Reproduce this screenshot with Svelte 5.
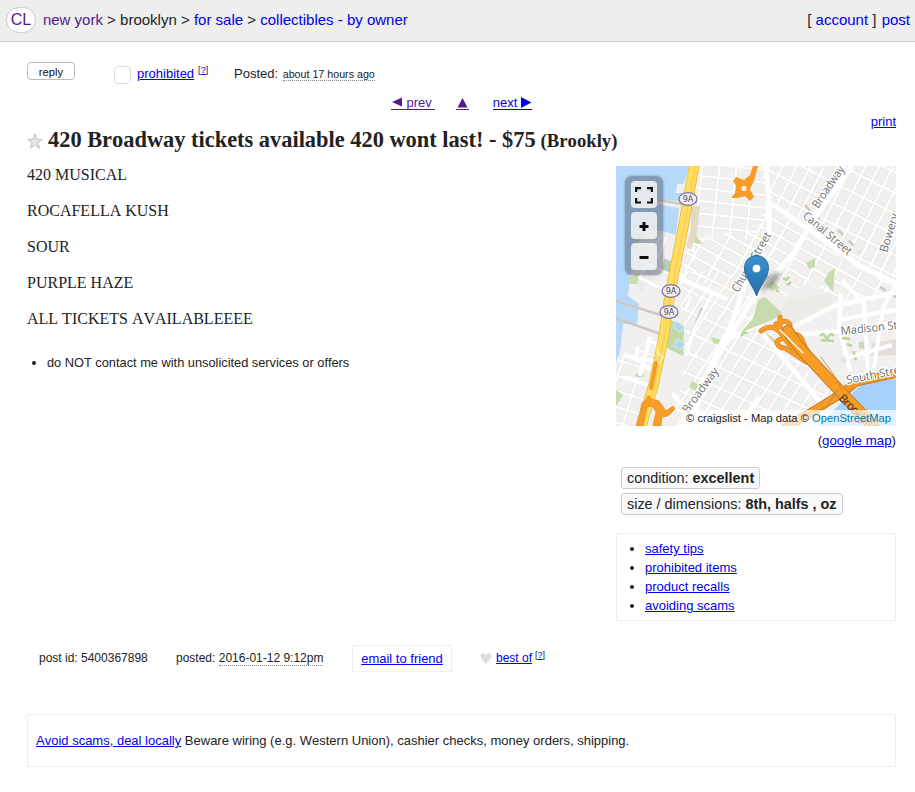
<script>
  const lines = ['420 MUSICAL', 'ROCAFELLA KUSH', 'SOUR', 'PURPLE HAZE', 'ALL TICKETS AVAILABLEEEE'];
  const tips = ['safety tips', 'prohibited items', 'product recalls', 'avoiding scams'];
  const shields = [[72, 33], [55, 125], [53, 146]];
  const highway = 'M78.500 -2L72 34L67 62L61 92L54 128L47 174L38 217L25 262';
  const bridge = 'M172 165Q181 180 194 193L222 223L263 266';
  const ramps = 'M145 165Q155 157 164 166Q174 182 185 188M160 158L168 166M164 165L164 151M163 163C163 151 175 155 174 161C173 168 166 165 168 171L184 184M184 186C174 181 175 167 182 169C188 171 185 178 193 187M166 173C158 173 161 183 169 182L190 196';
  const shore = 'M166 264L207 239L228 226L240 216L258 212L282 207';
</script>

<header>
  <nav class="crumbs">
    <a class="logo visited" href="#home">CL</a>
    <a class="visited" href="#ny">new york</a><span>&gt;</span><span>brooklyn</span><span>&gt;</span><a href="#sale">for sale</a><span>&gt;</span><a href="#owner">collectibles - by owner</a>
  </nav>
  <div>[ <a href="#account">account</a> ] <a class="post" href="#post">post</a></div>
</header>

<main>
  <div class="tools">
    <button class="reply">reply</button>
    <div class="flag"><i class="check"></i><a href="#prohibited">prohibited</a><sup>[<a href="#help">?</a>]</sup></div>
    <div class="age">Posted: <time>about 17 hours ago</time></div>
  </div>
  <div class="pager">
    <a class="visited prev" href="#prev"><svg width="11" height="10"><path d="M1 5L11 .5V9.5Z" /></svg>prev</a>
    <a class="visited up" href="#up"><svg width="13" height="11"><path d="M6.500 1L11.500 10.500H1.500Z" /></svg></a>
    <a class="next" href="#next">next<svg width="11" height="11"><path d="M0 0L10.500 5.500L0 11Z" /></svg></a>
  </div>
  <div class="print"><a href="#print">print</a></div>
  <h1>
    <svg width="16" height="17" viewBox="0 0 16 17"><path d="M8 1L9.800 6.300H15.300L10.900 9.700L12.500 15.300L8 12L3.500 15.300L5.100 9.700L.7 6.300H6.200Z" fill="#e8e8e8" stroke="#bbb" stroke-width=".9" /></svg>
    <span class="subject">420 Broadway tickets available 420 wont last! - $75</span>
    <small>(Brookly)</small>
  </h1>

  <section class="content">
    <article>
      {#each lines as line}<p>{line}</p>{/each}
      <ul><li>do NOT contact me with unsolicited services or offers</li></ul>
    </article>
    <aside>
      <div class="map">
        <svg class="tiles" width="280" height="260" viewBox="0 0 280 260">
          <defs>
            <pattern id="g1" width="17" height="12.5" patternUnits="userSpaceOnUse" patternTransform="rotate(6)"><path d="M0 0H17M0 0V12.500" stroke="#fff" stroke-width="5" /><path d="M2.500 2.500H17V12.500H2.500Z" fill="none" stroke="#dedbd6" stroke-width=".5" /></pattern>
            <pattern id="g2" width="18.500" height="12.300" patternUnits="userSpaceOnUse" patternTransform="translate(150 4) rotate(-63)"><path d="M0 0H18.500M0 0V12.300" stroke="#fff" stroke-width="5" /><path d="M2.500 2.500H18.500V12.300H2.500Z" fill="none" stroke="#dedbd6" stroke-width=".5" /></pattern>
            <pattern id="g3" width="22" height="11.800" patternUnits="userSpaceOnUse" patternTransform="translate(158 80) rotate(29)"><path d="M0 0H22M0 0V11.800" stroke="#fff" stroke-width="5" /><path d="M2.500 2.500H22V11.800H2.500Z" fill="none" stroke="#dedbd6" stroke-width=".5" /></pattern>
            <pattern id="g4" width="19" height="13" patternUnits="userSpaceOnUse" patternTransform="translate(100 180) rotate(-57) skewX(8)"><path d="M0 0H19M0 0V13" stroke="#fff" stroke-width="4.800" /><path d="M2.400 2.400H19V13H2.400Z" fill="none" stroke="#dedbd6" stroke-width=".5" /></pattern>
            <pattern id="g5" width="19" height="15" patternUnits="userSpaceOnUse" patternTransform="translate(10 180) rotate(17)"><path d="M0 0H19M0 0V15" stroke="#fff" stroke-width="4.500" /><path d="M2.200 2.200H19V15H2.200Z" fill="none" stroke="#dedbd6" stroke-width=".5" /></pattern>
            <linearGradient id="pin" x2="0" y2="1"><stop stop-color="#3c91d2" /><stop offset="1" stop-color="#226da8" /></linearGradient>
            <filter id="soft"><feGaussianBlur stdDeviation="2" /></filter>
          </defs>
          <rect width="280" height="260" fill="#f1f0ee" />
          <path d="M82 0H150L153 48L138 75L103 65L72 95L75 54Z" fill="url(#g1)" />
          <path d="M145 0H280V112L245 104L190 61L150 28Z" fill="url(#g2)" />
          <path d="M71 76L103 67L141 66L150 31L194 66L240 104L280 119V142L218 140L199 112L171 130L128 110L75 119L63 105Z" fill="url(#g3)" />
          <path d="M62 105L135 108L143 120L141 154L162 171L192 198L228 230L195 243L168 260H58L70 190Z" fill="url(#g4)" />
          <path d="M0 187L45 181L31 260H0Z" fill="url(#g5)" />
          <path d="M205 140L282 126V211L242 215L190 181Z" fill="#f1f0ee" />
          <path d="M172 134L215 127L216 141L171 161L163 146Z" fill="#edebe8" />

          <path d="M0 0H73L68 18L61 18L60 27H66L64 35L40 34V38L63 42L60 69L46 65L20 62L19 78L14 112L12 130L23 138L21 158L7 158L4 186L0 196Z" fill="#b5d9fa" />
          <path d="M280 213L260 215L245 219L229 233L202 260H280Z" fill="#a6d1fa" />
          <path d="M20 72C28 61 43 66 48 78L38 113L25 126L14 111Z" fill="#ebebe9" />
          <path d="M17 65L29 69L20 79Z" fill="#c5d5b5" />
          <path d="M14 111L26 107L21 118L13 118ZM80 70L87 78L78 77ZM150 108L164 122L157 125L149 120ZM190 97L199 92V101L193 103ZM213 106L219 102L217 126L208 115Z" fill="#c7dbae" />
          <path d="M53 153L68 161L67 190L51 182Z" fill="#c2d8ad" />
          <path d="M60 155L68 160L64 166L57 161ZM62 173L69 178L64 184L57 179Z" fill="#b0d8ee" stroke="#dbeae1" />
          <path d="M76 215L83 219L79 225L73 221ZM95 171L109 175V181L97 177ZM0 224L7 229L0 240ZM19 208H28V211H20ZM243 176L251 175V184L243 182Z" fill="#c7dbae" />
          <path d="M48 93L59 96L54 110L46 106Z" fill="#b9ceb9" />
          <path d="M75 40L84 40L80 72L74 83L70 80L75 64Z" fill="#e5d9bf" />
          <path d="M149 166L168 180L160 187L151 173Z" fill="#e2d2aa" />
          <path d="M256 177L282 173V189L255 190Z" fill="#e3dedb" />
          <g fill="none" stroke="#cdc8c1" stroke-width="2.500"><path d="M-1 135L48 150M-1 152L45 168M42 34L66 38M86 142L75 170M189 39L194 45" /><path d="M198 49L211 57M222 64L244 86M264 121L280 131" stroke-dasharray="7 8" /></g>
          <g fill="none" stroke="#fff" stroke-width="5">
            <path d="M151 35L194 64L244 100L280 117M150 0L153 34L153 67L130 116L116 156L95 207L73 260M236 0L204 44L177 88L136 134L106 183L79 232L64 260" />
            <path d="M111 133L61 111M143 158L106 176L65 260M140 160L207 239M166 170L226 165L282 157M171 164L218 140L282 126M225 128L223 159L234 205" stroke-width="4.500" />
            <path d="M226 114L248 138L252 207M280 118L267 142L258 202M222 154L280 144M230 192L276 179M68 111L57 105M34 171L24 210M8 190L38 195M7 211L35 220M22 181L20 192M56 227L84 260M143 231L123 260" stroke-width="4" />
            <path d="M22 111L61 130M25 95L60 111M45 70L24 111M42 92L50 71M10 188L37 204M31 173L43 180M70 143L75 130M97 126L78 163L70 190" stroke-width="2.800" />
          </g>
          <path d="M142 134L149 131L166 147L156 154L141 160L124 167L137 153Z" fill="#c7dbae" />
          <path d="M204 170q3-4 5 0t4 0t5 0M205 174l13 1M226 172l8 1M231 178l5 2M238 185v4M238 192l3 2M167 112l3 2l3-3M171 119l4-3M160 124l3 2M125 170q4-6 6-2" fill="none" stroke="#b9d59c" stroke-width="2.500" />
          <circle cx="228" cy="194" r="2.200" fill="none" stroke="#d6d3cf" />
          <path d={highway} fill="none" stroke="#ecb927" stroke-width="10.5" />
          <path d={highway} fill="none" stroke="#ffdc66" stroke-width="9" />
          <path d={highway} fill="none" stroke="#fbca3c" stroke-width="1" transform="translate(1 0)" />
          <path d="M41 181L42 188L47 191L42 198" fill="none" stroke="#fff" />
          <path d="M120 11L128 14L134 9L137 0H142L138 15L134 23L138 31L134 35L129 30L122 32L115 32L119 27L120 20L117 15Z" fill="#f79c26" />
          <circle cx="128" cy="22.500" r="2.700" fill="#fbead4" />
          <path d="M32 229L36 233L43 235L48 242L50 245L57 240L59 243L52 250L46 251L45 260H37L40 246L36 240L31 241L27 260H20L24 246L26 237L31 233Z" fill="#f69c27" stroke="#e48c25" stroke-width=".7" />
          <g fill="none" stroke-linecap="round" stroke-linejoin="round">
            <path d="M40 197L35 222" stroke="#f59c27" stroke-width="4" />
            <path d={shore} stroke="#c57725" stroke-width="9" /><path d={shore} stroke="#f59b27" stroke-width="7" />
            <path d={ramps} stroke="#cd802f" stroke-width="5" /><path d={ramps} stroke="#f69b27" stroke-width="3.800" />
            <path d={bridge} stroke="#c57925" stroke-width="12" /><path d={bridge} stroke="#f79c25" stroke-width="10" />
            <path d="M164 164L187 187" stroke="#fff" stroke-width="1.300" />
            <path d="M205 191L218 209L226 224M192 249L211 240L222 223M229 231L239 218" stroke="#d48023" stroke-width=".8" />
          </g>
          <g class="streets" stroke="#fff" stroke-width="2.500" paint-order="stroke" stroke-linejoin="round" fill="#706f6e">
            <text transform="translate(202 43) rotate(-56)" textLength="48" lengthAdjust="spacingAndGlyphs">Broadway</text>
            <text transform="translate(186 51) rotate(40)" textLength="60" lengthAdjust="spacingAndGlyphs">Canal Street</text>
            <text transform="translate(271 87) rotate(-73)" textLength="40">Bowery</text>
            <text transform="translate(122 127) rotate(-60)" textLength="67" lengthAdjust="spacingAndGlyphs">Church Street</text>
            <text transform="translate(72 248) rotate(-54)" textLength="53" lengthAdjust="spacingAndGlyphs">Broadway</text>
            <text transform="translate(225 169) rotate(-6)" textLength="78">Madison Street</text>
            <text transform="translate(231 218) rotate(-11)" textLength="65">South Street</text>
            <text class="bridge-name" transform="translate(222 233) rotate(44)" stroke="none" textLength="75">Brooklyn Bridge</text>
          </g>
          {#each shields as [x, y]}
            <ellipse cx={x} cy={y} rx="9" ry="6.300" fill="#f5efea" stroke="#7777a6" stroke-width="1.300" />
            <text class="shield" {x} y={y + 3} text-anchor="middle">9A</text>
          {/each}
          <path d="M142 127L151 112Q162 103 164 108Q164 114 152 122Z" fill="#222" opacity=".4" filter="url(#soft)" />
          <path d="M140.500 130C137 119 128.500 112 128.500 101.500A12 12 0 0 1 152.500 101.500C152.500 112 144 119 140.500 130Z" fill="url(#pin)" stroke="#2c6b9e" />
          <circle cx="140.500" cy="102.500" r="4.300" fill="#fff" stroke="#3277ad" stroke-width=".7" />
        </svg>
        <div class="controls">
          <span><svg width="18" height="18"><path d="M1.100 6V2.100H6M12 2.100H16.900V6M16.900 12V16.500H12M6 16.500H1.100V12" /></svg></span>
          <span><svg width="18" height="16"><path d="M9 4V13M4.500 8.500H13.500" stroke-width="3" /></svg></span>
          <span><svg width="18" height="16"><path d="M4.500 8.500H13.500" stroke-width="3" /></svg></span>
        </div>
        <div class="credit">© craigslist - Map data © <a href="#osm">OpenStreetMap</a></div>
      </div>
      <div class="google">(<a href="#google">google map</a>)</div>
      <div class="attrs">
        <span>condition: <b>excellent</b></span>
        <span>size / dimensions: <b>8th, halfs , oz</b></span>
      </div>
      <ul class="tips">{#each tips as tip}<li><a href="#tip">{tip}</a></li>{/each}</ul>
    </aside>
  </section>

  <div class="info">
    <span class="id">post id: 5400367898</span>
    <span class="date">posted: <time>2016-01-12 9:12pm</time></span>
    <div class="email"><a href="#email">email to friend</a></div>
    <svg width="12" height="12" viewBox="0 0 12 12"><path d="M6 12C4.500 8 .5 6 .5 3C.5-.3 4.500-.7 6 2.500C7.500-.7 11.500-.3 11.500 3C11.500 6 7.500 8 6 12Z" fill="#ddd" /></svg>
    <a class="best" href="#best">best of</a><sup>[<a href="#help">?</a>]</sup>
  </div>
  <div class="warning"><a href="#scams">Avoid scams, deal locally</a> Beware wiring (e.g. Western Union), cashier checks, money orders, shipping.</div>
</main>

<style>
  :global(body) { background: #fff; color: #222; font: 13px "Liberation Sans", Arial, sans-serif; font-kerning: none; }
  a { color: #00e; }
  a.visited { color: #551a8b; }
  header { height: 41px; border-bottom: 1px solid #ccc; background: #eee; display: flex; align-items: center; justify-content: space-between; padding: 0 5px 0 6px; font-size: 15px; line-height: 18px; }
  header > div { margin-top: -2px; }
  header a { text-decoration: none; }
  .post { margin-left: 1px; }
  .crumbs { display: flex; align-items: center; gap: 4.2px; margin-top: -1px; }
  .logo { box-sizing: border-box; width: 30px; height: 26px; border: 1px solid #ccc; border-radius: 14px; background: #fff; font-size: 16px; line-height: 24px; text-align: center; margin-right: 2.700px; }
  main { padding: 0 19px 0 27px; }
  .tools { display: flex; align-items: flex-start; height: 31px; padding-top: 20px; }
  .reply { width: 48px; height: 18px; padding: 1px 0 0; border: 1px solid #bbb; border-radius: 4px; background: #fff; color: #111; font: 11.3px/16px "Liberation Sans", Arial, sans-serif; }
  .flag { display: flex; margin: 3px 0 0 39px; line-height: 18px; width: 120px; }
  .check { box-sizing: border-box; width: 17px; height: 18px; border: 1px solid #ddd; border-radius: 4px; margin: 1px 6px 0 0; }
  sup { font-size: 9px; line-height: 11px; margin-left: 4px; vertical-align: top; }
  .age { margin-top: 3px; line-height: 18px; }
  .age time { margin-left: 1px; }
  time { font-size: 10.700px; border-bottom: 1px dotted #888; }
  .pager { display: flex; justify-content: center; height: 20px; line-height: 15px; padding-top: 2px; box-sizing: border-box; }
  .pager a { text-decoration: none; border-bottom: 1px solid currentColor; height: 14px; display: flex; align-items: center; }
  .pager svg { fill: currentColor; }
  .prev { gap: 5px; padding-right: 3px; margin-right: 21px; }
  .up { margin-right: 24px; }
  .next { gap: 4px; }
  .print { text-align: right; line-height: 18px; height: 16px; }
  h1 { display: flex; align-items: baseline; margin: 0 0 11px; height: 26px; line-height: 22px; font-family: "Liberation Serif", "Times New Roman", serif; font-size: 22.4px; white-space: nowrap; }
  h1 > svg { margin: 4px 5px 0 0; align-self: flex-start; }
  h1 small { font-size: 18.7px; margin-left: 5px; }
  .content { display: flex; height: 479px; }
  article { flex: 1; }
  article p { margin: 0 0 18px; font: 16px/18px "Liberation Serif", "Times New Roman", serif; font-kerning: none; }
  article ul { margin: 27px 0 0; padding-left: 20px; font-size: 12.8px; line-height: 15px; }
  aside { width: 280px; }
  .map { position: relative; width: 280px; height: 260px; overflow: hidden; }
  .tiles { display: block; }
  .streets { font: 11.5px "Open Sans", "Noto Sans", sans-serif; }
  .bridge-name { fill: #332a22; }
  .shield { font: 8px "DejaVu Sans", sans-serif; fill: #4d4872; }
  .controls { position: absolute; left: 9px; top: 10px; box-sizing: border-box; width: 38px; height: 99px; padding: 5px 6px; border-radius: 7px; background: rgba(65, 75, 95, .44); box-shadow: 0 0 3px rgba(0, 0, 0, .3); display: flex; flex-direction: column; gap: 4px; }
  .controls span { width: 26px; height: 27px; border-radius: 4px; background: rgba(255, 255, 255, .78); display: flex; align-items: center; justify-content: center; }
  .controls svg { fill: none; stroke: #111; stroke-width: 2.2; }
  .credit { position: absolute; right: 0; bottom: 0; padding: 0 5px; font-size: 11.2px; line-height: 16px; background: rgba(255, 255, 255, .7); color: #222; white-space: nowrap; }
  .credit a { color: #0078a8; text-decoration: none; }
  .google { line-height: 16px; padding-top: 7px; text-align: right; font-size: 13.3px; }
  .attrs { display: flex; flex-direction: column; align-items: flex-start; gap: 4px; margin: 18px 0 0 5px; font-size: 14.400px; }
  .attrs span { box-sizing: border-box; height: 22px; line-height: 20px; border: 1px solid #ccc; border-radius: 3px; padding: 0 5px; background: #fafafa; white-space: nowrap; }
  .tips { box-sizing: border-box; height: 88px; margin: 18px 0 0; padding: 5px 0 0 28px; border: 1px solid #eee; line-height: 19px; }
  .info { display: flex; height: 27px; line-height: 29px; padding-left: 12px; font-size: 12px; align-items: center; }
  .id { width: 137px; }
  .date { width: 176px; }
  .info time { font-size: 12px; }
  .email { box-sizing: border-box; width: 100px; height: 27px; border: 1px solid #eee; line-height: 26px; text-align: center; margin-right: 28px; font-size: 13px; }
  .best { margin-left: 4px; }
  .info sup { align-self: flex-start; margin: 5px 0 0 3px; }
  .warning { box-sizing: border-box; height: 53px; margin-top: 42px; border: 1px solid #eee; line-height: 52px; padding-left: 8px; font-size: 13px; }
</style>
